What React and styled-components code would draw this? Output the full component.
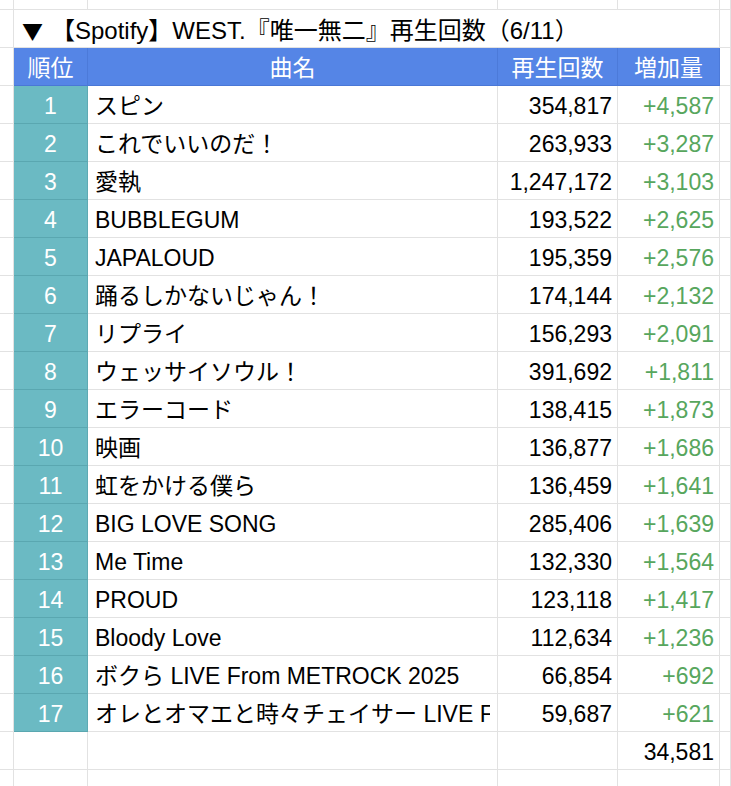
import React from 'react';
import styled, { createGlobalStyle } from 'styled-components';

const songs = [
  { name: 'スピン', plays: 354817, gain: 4587 },
  { name: 'これでいいのだ！', plays: 263933, gain: 3287 },
  { name: '愛執', plays: 1247172, gain: 3103 },
  { name: 'BUBBLEGUM', plays: 193522, gain: 2625 },
  { name: 'JAPALOUD', plays: 195359, gain: 2576 },
  { name: '踊るしかないじゃん！', plays: 174144, gain: 2132 },
  { name: 'リプライ', plays: 156293, gain: 2091 },
  { name: 'ウェッサイソウル！', plays: 391692, gain: 1811 },
  { name: 'エラーコード', plays: 138415, gain: 1873 },
  { name: '映画', plays: 136877, gain: 1686 },
  { name: '虹をかける僕ら', plays: 136459, gain: 1641 },
  { name: 'BIG LOVE SONG', plays: 285406, gain: 1639 },
  { name: 'Me Time', plays: 132330, gain: 1564 },
  { name: 'PROUD', plays: 123118, gain: 1417 },
  { name: 'Bloody Love', plays: 112634, gain: 1236 },
  { name: 'ボクら LIVE From METROCK 2025', plays: 66854, gain: 692 },
  { name: 'オレとオマエと時々チェイサー LIVE From METROCK 2025', plays: 59687, gain: 621 },
];

const fmt = n => n.toLocaleString('en-US');

export default function App() {
  const total = songs.reduce((acc, s) => acc + s.gain, 0);

  return (
    <>
      <GlobalStyle />
      <Sheet>
        <Row $h={10}>
          <Cell /><Cell /><Cell /><Cell /><Cell /><Cell />
        </Row>

        <Row>
          <Cell />
          <Title>
            <Mark>▼</Mark>【Spotify】WEST.『唯一無二』再生回数（6/11）
          </Title>
          <Cell />
        </Row>

        <Row>
          <Cell />
          <HeadCell>順位</HeadCell>
          <HeadCell>曲名</HeadCell>
          <HeadCell>再生回数</HeadCell>
          <HeadCell>増加量</HeadCell>
          <Cell />
        </Row>

        {songs.map((s, i) => (
          <Row key={s.name}>
            <Cell />
            <RankCell>{i + 1}</RankCell>
            <NameCell><Clip>{s.name}</Clip></NameCell>
            <NumCell>{fmt(s.plays)}</NumCell>
            <NumCell $green>+{fmt(s.gain)}</NumCell>
            <Cell />
          </Row>
        ))}

        <Row>
          <Cell /><Cell /><Cell /><Cell />
          <NumCell>{fmt(total)}</NumCell>
          <Cell />
        </Row>

        <Row $h={20}>
          <Cell /><Cell /><Cell /><Cell /><Cell /><Cell />
        </Row>
      </Sheet>
    </>
  );
}

const GlobalStyle = createGlobalStyle`
  html, body {
    margin: 0;
    padding: 0;
    background: #fff;
  }
  body {
    font-family: "Liberation Sans", "Noto Sans CJK JP", sans-serif;
    color: #000;
    overflow: hidden;
  }
`;

const Sheet = styled.div`
  width: 731px;
  display: flex;
  flex-direction: column;
`;

const Row = styled.div`
  display: grid;
  grid-template-columns: 14px 74px 410px 120px 102px 1fr;
  height: ${p => p.$h || 38}px;
`;

const Cell = styled.div`
  box-sizing: border-box;
  border-right: 1px solid #e2e2e2;
  border-bottom: 1px solid #e2e2e2;
  font-size: 23px;
  line-height: 36px;
  padding-top: 2px;
  white-space: nowrap;
  overflow: hidden;
`;

const Title = styled(Cell)`
  grid-column: 2 / 6;
  padding-left: 8px;
  font-size: 24px;
`;

const Mark = styled.span`
  font-family: "Noto Sans CJK JP", sans-serif;
  font-size: 21px;
  margin-right: 8px;
`;

const HeadCell = styled(Cell)`
  background: #5585e6;
  color: #fff;
  text-align: center;
  border-right-color: #4c7ad9;
  border-bottom-color: #4a77d6;
`;

const RankCell = styled(Cell)`
  background: #6bbac3;
  color: #fff;
  text-align: center;
  border-right-color: #5eaab3;
  border-bottom-color: #5aa7b0;
`;

const NameCell = styled(Cell)`
  padding-left: 7px;
  padding-right: 7px;
`;

const Clip = styled.span`
  display: block;
  overflow: hidden;
  white-space: nowrap;
`;

const NumCell = styled(Cell)`
  text-align: right;
  padding-right: 5px;
  color: ${p => (p.$green ? '#57a65d' : '#000')};
`;
